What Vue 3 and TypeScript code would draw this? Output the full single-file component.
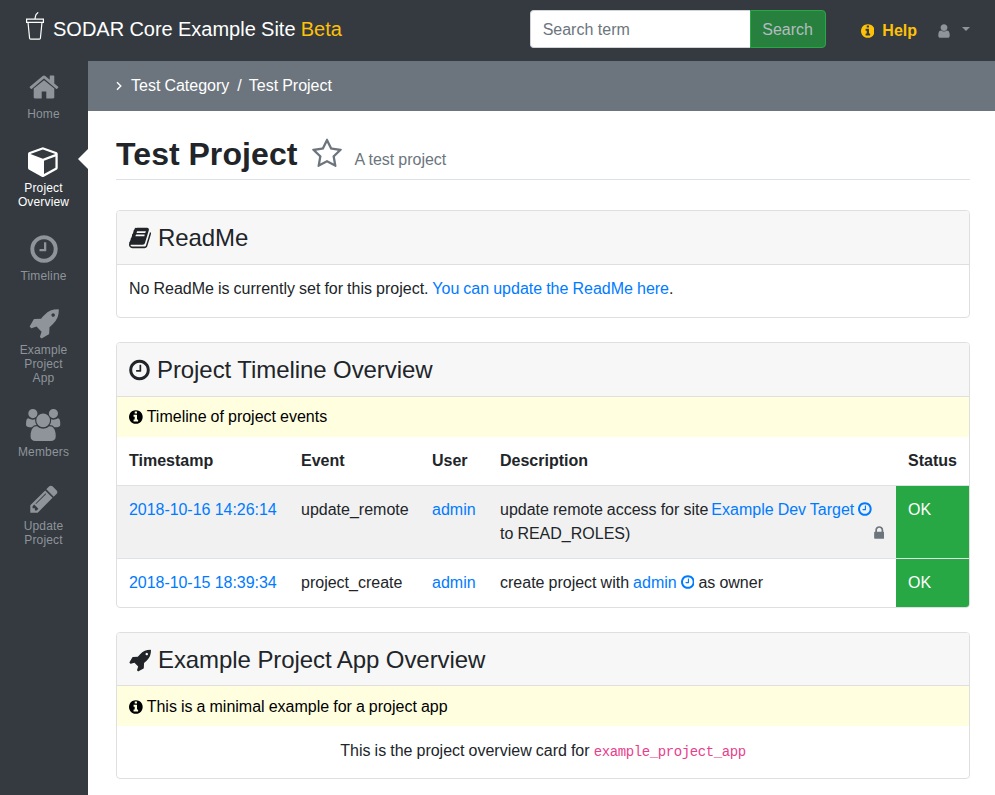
<script setup lang="ts">
const icons: Record<string, string> = {
  home: 'M1472 992v480q0 26-19 45t-45 19h-384v-384h-256v384h-384q-26 0-45-19t-19-45v-480q0-1 .5-3t.5-3l575-474 575 474q1 2 1 6zm223-69l-62 74q-8 9-21 11h-3q-13 0-21-7l-692-577-692 577q-12 8-24 7-13-2-21-11l-62-74q-8-10-7-23.5t11-21.5l719-599q32-26 76-26t76 26l244 204v-195q0-14 9-23t23-9h192q14 0 23 9t9 23v408l219 182q10 8 11 21.5t-7 23.5z',
  cube: 'M896 1629l640-349v-636l-640 233v752zm-64-865l698-254-698-254-698 254zm832-252v768q0 35-18 65t-49 47l-704 384q-28 16-61 16t-61-16l-704-384q-31-17-49-47t-18-65v-768q0-40 23-73t61-47l704-256q22-8 44-8t44 8l704 256q38 14 61 47t23 73z',
  clock: 'M1024 544v448q0 14-9 23t-23 9h-320q-14 0-23-9t-9-23v-64q0-14 9-23t23-9h224v-352q0-14 9-23t23-9h64q14 0 23 9t9 23zm416 352q0-148-73-273t-198-198-273-73-273 73-198 198-73 273 73 273 198 198 273 73 273-73 198-198 73-273zm224 0q0 209-103 385.5t-279.5 279.5-385.5 103-385.5-103-279.5-279.5-103-385.5 103-385.5 279.5-279.5 385.5-103 385.5 103 279.5 279.5 103 385.5z',
  rocket: 'M1504 448q0-40-28-68t-68-28-68 28-28 68 28 68 68 28 68-28 28-68zm224-288q0 249-75.5 430.5t-253.5 360.5q-81 80-195 176l-20 379q-2 16-16 26l-384 224q-7 4-16 4-12 0-23-9l-64-64q-13-14-8-32l85-276-281-281-276 85q-3 1-9 1-14 0-23-9l-64-64q-17-19-5-39l224-384q10-14 26-16l379-20q96-114 176-195 188-187 358-258t431-71q14 0 23 9t9 23z',
  users: 'M593 896q-162 5-265 128h-134q-82 0-138-40.5t-56-118.5q0-353 124-353 6 0 43.5 21t97.5 42.5 119 21.5q67 0 133-23-5 37-5 66 0 139 81 256zm1071 637q0 120-73 189.5t-194 69.5h-874q-121 0-194-69.5t-73-189.5q0-53 3.5-103.5t14-109 26.5-108.5 43-97.5 62-81 85.5-53.5 111.5-20q10 0 43 21.5t73 48 107 48 135 21.5 135-21.5 107-48 73-48 43-21.5q61 0 111.5 20t85.5 53.5 62 81 43 97.5 26.5 108.5 14 109 3.5 103.5zm-1024-1277q0 106-75 181t-181 75-181-75-75-181 75-181 181-75 181 75 75 181zm704 384q0 159-112.5 271.5t-271.5 112.5-271.5-112.5-112.5-271.5 112.5-271.5 271.5-112.5 271.5 112.5 112.5 271.5zm576 225q0 78-56 118.5t-138 40.5h-134q-103-123-265-128 81-117 81-256 0-29-5-66 66 23 133 23 59 0 119-21.5t97.5-42.5 43.5-21q124 0 124 353zm-128-609q0 106-75 181t-181 75-181-75-75-181 75-181 181-75 181 75 75 181z',
  pencil: 'M491 1536l91-91-235-235-91 91v107h128v128h107zm523-928q0-22-22-22-10 0-17 7l-542 542q-7 7-7 17 0 22 22 22 10 0 17-7l542-542q7-7 7-17zm-54-192l416 416-832 832h-416v-416zm683 96q0 53-37 90l-166 166-416-416 166-165q36-38 90-38 53 0 91 38l235 234q37 39 37 91z',
  star: 'M1201 1004l306-297-422-62-189-382-189 382-422 62 306 297-73 421 378-199 377 199zm527-357q0 22-26 48l-363 354 86 500q1 7 1 20 0 50-41 50-19 0-40-12l-449-236-449 236q-22 12-40 12-21 0-31.5-14.5t-10.5-35.5q0-6 2-20l86-500-364-354q-25-27-25-48 0-37 56-46l502-73 225-455q19-41 49-41t49 41l225 455 502 73q56 9 56 46z',
  book: 'M1703 478q40 57 18 129l-275 906q-19 64-76.5 107.5t-122.5 43.5h-923q-77 0-148.5-53.5t-99.5-131.5q-24-67-2-127 0-4 3-27t4-37q1-8-3-21.5t-3-19.5q2-11 8-21t16.5-23.5 16.5-23.5q23-38 45-91.5t30-91.5q3-10 .5-30t-.5-28q3-11 17-28t17-23q21-36 42-92t25-90q1-9-2.5-32t.5-28q4-13 22-30.5t22-22.5q19-26 42.5-84.5t27.5-96.5q1-8-3-25.5t-2-26.5q2-8 9-18t18-23 17-21q8-12 16.5-30.5t15-35 16-36 19.5-32 26.5-23.5 36-11.5 47.5 5.5l-1 3q38-9 51-9h761q74 0 114 56t18 130l-274 906q-36 119-71.5 153.5t-128.5 34.5h-869q-27 0-38 15-11 16-1 43 24 70 144 70h923q29 0 56-15.5t35-41.5l300-987q7-22 5-57 38 15 59 43zm-1064 2q-4 13 2 22.5t20 9.5h608q13 0 25.5-9.5t16.5-22.5l21-64q4-13-2-22.5t-20-9.5h-608q-13 0-25.5 9.5t-16.5 22.5zm-83 256q-4 13 2 22.5t20 9.5h608q13 0 25.5-9.5t16.5-22.5l21-64q4-13-2-22.5t-20-9.5h-608q-13 0-25.5 9.5t-16.5 22.5z',
  info: 'M1152 1376v-160q0-14-9-23t-23-9h-96v-512q0-14-9-23t-23-9h-320q-14 0-23 9t-9 23v160q0 14 9 23t23 9h96v320h-96q-14 0-23 9t-9 23v160q0 14 9 23t23 9h448q14 0 23-9t9-23zm-128-896v-160q0-14-9-23t-23-9h-192q-14 0-23 9t-9 23v160q0 14 9 23t23 9h192q14 0 23-9t9-23zm640 416q0 209-103 385.5t-279.5 279.5-385.5 103-385.5-103-279.5-279.5-103-385.5 103-385.5 279.5-279.5 385.5-103 385.5 103 279.5 279.5 103 385.5z',
  lock: 'M640 768h512v-192q0-106-75-181t-181-75-181 75-75 181v192zm832 96v576q0 40-28 68t-68 28h-960q-40 0-68-28t-28-68v-576q0-40 28-68t68-28h32v-192q0-184 132-316t316-132 316 132 132 316v192h32q40 0 68 28t28 68z',
  user: 'M1536 1399q0 109-62.5 187t-150.5 78h-854q-88 0-150.5-78t-62.5-187q0-85 8.5-160.5t31.5-152 58.5-131 94-89 134.5-34.5q131 128 313 128t313-128q76 0 134.5 34.5t94 89 58.5 131 31.5 152 8.5 160.5zm-256-887q0 159-112.5 271.5t-271.5 112.5-271.5-112.5-112.5-271.5 112.5-271.5 271.5-112.5 271.5 112.5 112.5 271.5z',
}

interface SideLink {
  label: string[]
  icon: string
  active?: boolean
}

const sideLinks: SideLink[] = [
  { label: ['Home'], icon: 'home' },
  { label: ['Project', 'Overview'], icon: 'cube', active: true },
  { label: ['Timeline'], icon: 'clock' },
  { label: ['Example', 'Project', 'App'], icon: 'rocket' },
  { label: ['Members'], icon: 'users' },
  { label: ['Update', 'Project'], icon: 'pencil' },
]
</script>

<template>
  <div class="page">
    <header class="navbar">
      <div class="brand">
        <svg class="logo" viewBox="0 0 18 28" fill="none" stroke="currentColor" stroke-width="1.2">
          <path d="M2 10.3l1.6 16q.1.9 1 .9h8.8q.9 0 1-.9l1.6-16" />
          <path d="M.6 7.2h16.8v3.1H.6zM8.8 7.2l1.2-4.6L12.2.4" />
        </svg>
        <span>SODAR Core Example Site <em>Beta</em></span>
      </div>
      <form class="search" @submit.prevent>
        <input type="text" placeholder="Search term" />
        <button type="submit">Search</button>
      </form>
      <a class="help">
        <svg class="ic narrow" viewBox="128 0 1536 1792"><path :d="icons.info" /></svg>
        Help
      </a>
      <div class="user">
        <svg class="ic" viewBox="0 0 1792 1792"><path :d="icons.user" /></svg>
        <span class="caret"></span>
      </div>
    </header>

    <div class="body">
      <nav class="sidebar">
        <a v-for="link in sideLinks" :key="link.icon" class="side-link" :class="{ active: link.active }">
          <svg v-if="link.icon === 'users'" class="wide" viewBox="0 0 1920 1792"><path :d="icons.users" /></svg>
          <svg v-else viewBox="0 0 1792 1792"><path :d="icons[link.icon]" /></svg>
          <span v-for="line in link.label" :key="line">{{ line }}</span>
        </a>
      </nav>

      <div class="main">
        <div class="crumbs">
          <svg class="chevron" viewBox="0 0 8 10" fill="none" stroke="currentColor" stroke-width="1.4"><path d="M2 1.2L5.8 5 2 8.8" /></svg>
          <span>Test Category</span>
          <span class="sep">/</span>
          <span>Test Project</span>
        </div>

        <div class="content">
          <div class="title-bar">
            <h2>Test Project</h2>
            <svg class="star" viewBox="0 0 1792 1792"><path :d="icons.star" /></svg>
            <span class="subtitle">A test project</span>
          </div>

          <section class="card">
            <h4 class="card-head">
              <svg class="ic head-wide" viewBox="64 0 1664 1792"><path :d="icons.book" /></svg>
              ReadMe
            </h4>
            <p class="readme">
              No ReadMe is currently set for this project.
              <a>You can update the ReadMe here</a>.
            </p>
          </section>

          <section class="card">
            <h4 class="card-head">
              <svg class="ic head-narrow" viewBox="128 0 1536 1792"><path :d="icons.clock" /></svg>
              Project Timeline Overview
            </h4>
            <div class="note">
              <svg class="ic narrow" viewBox="128 0 1536 1792"><path :d="icons.info" /></svg>
              Timeline of project events
            </div>
            <table>
              <colgroup>
                <col class="c1" /><col class="c2" /><col class="c3" /><col class="c4" /><col class="c5" />
              </colgroup>
              <thead>
                <tr>
                  <th>Timestamp</th>
                  <th>Event</th>
                  <th>User</th>
                  <th>Description</th>
                  <th>Status</th>
                </tr>
              </thead>
              <tbody>
                <tr class="shaded">
                  <td class="stamp"><a>2018-10-16 14:26:14</a></td>
                  <td>update_remote</td>
                  <td><a>admin</a></td>
                  <td>
                    update remote access for site <a class="target">Example Dev Target</a> <svg class="ic narrow link-ic" viewBox="128 0 1536 1792"><path :d="icons.clock" /></svg>
                    to READ_ROLES)
                    <svg class="lock" viewBox="192 0 1280 1792"><path :d="icons.lock" /></svg>
                  </td>
                  <td class="ok">OK</td>
                </tr>
                <tr>
                  <td class="stamp"><a>2018-10-15 18:39:34</a></td>
                  <td>project_create</td>
                  <td><a>admin</a></td>
                  <td>
                    create project with <a>admin</a> <svg class="ic narrow link-ic" viewBox="128 0 1536 1792"><path :d="icons.clock" /></svg>
                    as owner
                  </td>
                  <td class="ok">OK</td>
                </tr>
              </tbody>
            </table>
          </section>

          <section class="card">
            <h4 class="card-head app-head">
              <svg class="ic head-wide" viewBox="64 0 1664 1792"><path :d="icons.rocket" /></svg>
              Example Project App Overview
            </h4>
            <div class="note app-note">
              <svg class="ic narrow" viewBox="128 0 1536 1792"><path :d="icons.info" /></svg>
              This is a minimal example for a project app
            </div>
            <p class="app-text">This is the project overview card for <code>example_project_app</code></p>
          </section>
        </div>
      </div>
    </div>
  </div>
</template>

<style>
html,
body {
  margin: 0;
  overflow: hidden;
}
</style>

<style scoped>
.page {
  height: 100vh;
  display: flex;
  flex-direction: column;
  overflow: hidden;
  font-family: "Liberation Sans", Arial, sans-serif;
  font-size: 16px;
  line-height: 24px;
  word-spacing: -0.4px;
  color: #212529;
}

.ic {
  width: 1em;
  height: 1em;
  flex: none;
  fill: currentColor;
  vertical-align: -0.125em;
}

.ic.narrow {
  width: 13.7px;
  height: 16px;
}

/* top bar */
.navbar {
  flex: 0 0 61px;
  display: flex;
  align-items: center;
  background: #343a40;
  padding: 0 16px 3px 26px;
  box-sizing: border-box;
}

.brand {
  display: flex;
  align-items: center;
  gap: 9px;
  color: #fff;
  font-size: 20px;
  word-spacing: -0.3px;
  margin-right: auto;
}

.brand em {
  font-style: normal;
  color: #ffc107;
}

.logo {
  width: 18px;
  height: 28px;
  margin-top: -6px;
}

.search {
  display: flex;
  margin-right: 35px;
}

.search input {
  width: 220px;
  height: 38px;
  box-sizing: border-box;
  padding: 7px 12px 5px;
  border: 1px solid #ced4da;
  border-right: 0;
  border-radius: 4px 0 0 4px;
  font: inherit;
  color: #495057;
  outline: none;
}

.search input::placeholder {
  color: #6c757d;
}

.search button {
  width: 76px;
  height: 38px;
  padding: 2px 0 0;
  border: 1px solid #28a745;
  border-radius: 0 4px 4px 0;
  background: #28803f;
  color: #b4bcc0;
  font: inherit;
}

.help {
  color: #ffc107;
  font-weight: 700;
  margin-right: 19px;
  display: flex;
  align-items: center;
  gap: 8px;
  margin-top: 3px;
}

.user {
  display: flex;
  align-items: center;
  gap: 10px;
  color: #8e949a;
  margin-right: 9px;
  margin-top: 3px;
}

.caret {
  border-top: 4px solid #8e949a;
  border-left: 4px solid transparent;
  border-right: 4px solid transparent;
  margin-top: -4px;
}

.body {
  flex: 1;
  display: flex;
  min-height: 0;
}

/* side navigation */
.sidebar {
  flex: 0 0 88px;
  display: flex;
  flex-direction: column;
  background: #343a40;
  padding-top: 8px;
}

.side-link {
  position: relative;
  display: flex;
  flex-direction: column;
  align-items: center;
  padding-right: 1px;
  color: #8e949a;
  font-size: 12px;
  line-height: 14px;
  letter-spacing: 0.15px;
  margin-bottom: 22px;
}

.side-link svg {
  width: 32px;
  height: 32px;
  fill: currentColor;
  margin: 2px 0 4px;
}

.side-link svg.wide {
  width: 34.3px;
}

.side-link.active {
  color: #fff;
}

.side-link.active::after {
  content: "";
  position: absolute;
  right: 0;
  top: 6px;
  border-top: 10px solid transparent;
  border-bottom: 10px solid transparent;
  border-right: 10px solid #fff;
}

.main {
  flex: 1;
  min-width: 0;
}

.crumbs {
  height: 50px;
  display: flex;
  align-items: center;
  gap: 8px;
  padding-left: 27px;
  background: #6c757d;
  color: #fff;
}

.chevron {
  width: 8px;
  height: 10px;
}

.sep {
  margin-right: -1px;
}

.content {
  padding: 16px 25px 0 28px;
}

.title-bar {
  display: flex;
  align-items: baseline;
  height: 52px;
  border-bottom: 1px solid #dee2e6;
  margin-bottom: 30px;
}

.title-bar h2 {
  margin: 0;
  font-size: 32px;
  line-height: 54px;
  font-weight: 700;
  letter-spacing: 0.1px;
}

.star {
  width: 32px;
  height: 32px;
  fill: #6c757d;
  margin-left: 13px;
  align-self: flex-start;
  margin-top: 11px;
}

.subtitle {
  color: #6c757d;
  margin-left: 12px;
}

/* cards */
.card {
  border: 1px solid #dfdfdf;
  border-radius: 4px;
  margin-bottom: 24px;
  overflow: hidden;
  background: #fff;
}

.card-head {
  margin: 0;
  height: 54px;
  padding: 0 12px;
  box-sizing: border-box;
  display: flex;
  align-items: center;
  gap: 7px;
  background: #f7f7f7;
  border-bottom: 1px solid #dfdfdf;
  font-size: 24px;
  font-weight: 400;
  line-height: 29px;
  letter-spacing: -0.08px;
  word-spacing: 0;
}

.card-head.app-head {
  height: 53px;
  padding-top: 2px;
}

.head-wide {
  width: 22px;
  height: 24px;
}

.head-narrow {
  width: 21px;
  height: 24px;
}

.readme {
  margin: 0;
  padding: 12px 12px 16px;
}

a {
  color: #007bff;
}

.target {
  margin-left: -1px;
}

.note {
  height: 40px;
  box-sizing: border-box;
  display: flex;
  align-items: center;
  gap: 4px;
  padding: 0 12px;
  background: #ffffe0;
  color: #000;
}

.note.app-note {
  padding-top: 2px;
}

table {
  width: 100%;
  table-layout: fixed;
  border-collapse: collapse;
}

.c1 { width: 172px; }
.c2 { width: 131px; }
.c3 { width: 68px; }
.c4 { width: 408px; }

th {
  height: 48px;
  padding: 0 12px;
  text-align: left;
  font-weight: 700;
  box-sizing: border-box;
}

td {
  padding: 12px;
  border-top: 1px solid #dee2e6;
  vertical-align: top;
}

.stamp {
  white-space: nowrap;
  word-spacing: 0;
  letter-spacing: -0.05px;
}

.shaded td {
  background: #f1f1f1;
}

.link-ic {
  color: #007bff;
}

.lock {
  float: right;
  width: 11.4px;
  height: 16px;
  margin-top: 3px;
  fill: #6c757d;
}

td.ok,
.shaded td.ok {
  background: #28a745;
  color: #fff;
}

.app-text {
  margin: 0;
  padding: 13px 12px 14px;
  text-align: center;
}

code {
  font-family: "Liberation Mono", monospace;
  font-size: 14px;
  letter-spacing: -0.4px;
  color: #e83e8c;
}
</style>
